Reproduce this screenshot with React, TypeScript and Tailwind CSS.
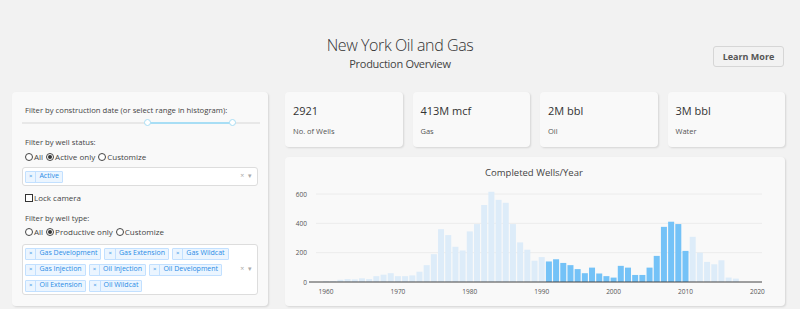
import React from "react";

const wells: number[] = [
  5, 6, 15, 20, 18, 25, 20, 40, 50, 60, 40, 40, 45, 70, 115, 190, 360, 320, 240, 215,
  345, 395, 525, 615, 560, 540, 395, 270, 220, 145, 170, 140, 155, 130, 115, 88, 60, 98, 58, 40,
  30, 110, 98, 48, 48, 98, 178, 376, 411, 395, 212, 308, 200, 137, 121, 148, 30, 23,
];

const Radio = ({ label, checked }: { label: string; checked?: boolean }) => (
  <label className="flex items-center gap-[1px] mr-[3px]">
    <span className="w-[8px] h-[8px] rounded-full border border-[#444] flex items-center justify-center bg-white">
      {checked && <span className="w-[4px] h-[4px] rounded-full bg-[#333]" />}
    </span>
    <span>{label}</span>
  </label>
);

const Tag = ({ label }: { label: string }) => (
  <span className="flex items-center h-[12px] border border-[#c2e0ff] bg-[#ebf5ff] text-[#2a8ce6] text-[7px] rounded-[1px]">
    <span className="px-[3px] border-r border-[#c2e0ff] h-full flex items-center text-[6px]">×</span>
    <span className="px-[3px]">{label}</span>
  </span>
);

const Stat = ({ value, label }: { value: string; label: string }) => (
  <div className="w-[118px] h-[55px] bg-[#f9f9f9] rounded-[4px] shadow-[1px_1px_2px_rgba(0,0,0,0.12)] pl-[8px] pt-[11px]">
    <div className="text-[11px] text-[#333] leading-[16px]">{value}</div>
    <div className="text-[7.5px] text-[#555] mt-[7px]">{label}</div>
  </div>
);

const Chart = () => {
  const base = 125;
  const k = 88 / 600;
  const x0 = 41;
  const step = 7.19;
  return (
    <svg width="500" height="149" className="block">
      <text x="249" y="19" textAnchor="middle" fontSize="9.5" fill="#444" fontFamily="Open Sans">
        Completed Wells/Year
      </text>
      {[200, 400, 600].map((v) => (
        <line key={v} x1="31" x2="477" y1={base - v * k} y2={base - v * k} stroke="#ececec" strokeWidth="1" />
      ))}
      {[0, 200, 400, 600].map((v) => (
        <text key={v} x="22" y={base - v * k + 2.5} textAnchor="end" fontSize="6.5" fill="#555" fontFamily="Open Sans">
          {v}
        </text>
      ))}
      {wells.map((w, i) => {
        const year = 1960 + i;
        const blue = year >= 1991 && year <= 2010;
        const h = w * k;
        return (
          <rect
            key={year}
            x={x0 + i * step - 3}
            y={base - h}
            width="6"
            height={h}
            fill={blue ? "#74c2f7" : "#ddecf9"}
          />
        );
      })}
      <line x1="24" x2="477" y1={base} y2={base} stroke="#444" strokeWidth="1" />
      {[1960, 1970, 1980, 1990, 2000, 2010, 2020].map((y) => (
        <text key={y} x={x0 + (y - 1960) * step} y="137" textAnchor="middle" fontSize="6.5" fill="#555" fontFamily="Open Sans">
          {y}
        </text>
      ))}
    </svg>
  );
};

export default function App() {
  return (
    <div className="w-[800px] h-[309px] overflow-hidden bg-[#f2f2f2] font-['Open_Sans',sans-serif] text-[#444]">
      {/* Header */}
      <div className="grid grid-cols-[1fr_auto_1fr] h-[92px] items-start pt-[34px]">
        <div />
        <div className="flex flex-col items-center">
          <h1 className="text-[16px] leading-[22px] text-[#333] font-light tracking-[-0.4px]">New York Oil and Gas</h1>
          <h2 className="text-[11px] leading-[16px] text-[#444] tracking-[-0.3px]">Production Overview</h2>
        </div>
        <div className="flex justify-end pr-[16px] pt-[12px]">
          <button className="w-[71px] h-[21px] border border-[#d6d6d6] rounded-[3px] text-[9px] font-bold text-[#555]">
            Learn More
          </button>
        </div>
      </div>

      {/* Body */}
      <div className="flex pl-[12px] gap-[17px]">
        <div className="w-[256px] h-[214px] bg-[#f9f9f9] rounded-[4px] shadow-[1px_1px_2px_rgba(0,0,0,0.12)] px-[10px] pt-[12px] text-[7.7px] text-[#444]">
          <div className="pl-[3px] leading-[12px]">Filter by construction date (or select range in histogram):</div>
          <div className="relative h-[10px] mt-[2px]">
            <div className="absolute left-0 right-[-2px] top-[4px] h-[2px] bg-[#e8e8e8]" />
            <div className="absolute left-[125px] w-[85px] top-[4px] h-[2px] bg-[#a8def5]" />
            <div className="absolute left-[122px] top-[1px] w-[7px] h-[7px] rounded-full border border-[#a8def5] bg-white" />
            <div className="absolute left-[207px] top-[1px] w-[7px] h-[7px] rounded-full border border-[#a8def5] bg-white" />
          </div>
          <div className="pl-[3px] mt-[8px] leading-[12px]">Filter by well status:</div>
          <div className="flex pl-[3px] mt-[3px] leading-[12px] text-[8px]">
            <Radio label="All" />
            <Radio label="Active only" checked />
            <Radio label="Customize" />
          </div>
          <div className="flex items-center justify-between mt-[4px] h-[19px] bg-white border border-[#ddd] rounded-[3px] px-[2px]">
            <Tag label="Active" />
            <span className="text-[#aaa] text-[7px] pr-[3px]">× <span className="ml-[2px]">▾</span></span>
          </div>
          <label className="flex items-center gap-[1px] pl-[3px] mt-[6px] leading-[12px] text-[8px]">
            <span className="w-[8px] h-[8px] border border-[#333] bg-white" />
            Lock camera
          </label>
          <div className="pl-[3px] mt-[8px] leading-[12px]">Filter by well type:</div>
          <div className="flex pl-[3px] mt-[2px] leading-[12px] text-[8px]">
            <Radio label="All" />
            <Radio label="Productive only" checked />
            <Radio label="Customize" />
          </div>
          <div className="flex items-center mt-[6px] h-[51px] bg-white border border-[#ddd] rounded-[3px] pl-[2px] pr-[5px]">
            <div className="flex-1 flex flex-wrap gap-x-[3px] gap-y-[4px]">
              <Tag label="Gas Development" />
              <Tag label="Gas Extension" />
              <Tag label="Gas Wildcat" />
              <Tag label="Gas Injection" />
              <Tag label="Oil Injection" />
              <Tag label="Oil Development" />
              <Tag label="Oil Extension" />
              <Tag label="Oil Wildcat" />
            </div>
            <span className="text-[#aaa] text-[7px]">× <span className="ml-[2px]">▾</span></span>
          </div>
        </div>

        <div className="w-[500px] flex flex-col gap-[10px]">
          <div className="flex gap-[10px]">
            <Stat value="2921" label="No. of Wells" />
            <Stat value="413M mcf" label="Gas" />
            <Stat value="2M bbl" label="Oil" />
            <Stat value="3M bbl" label="Water" />
          </div>
          <div className="h-[149px] bg-[#f9f9f9] rounded-[4px] shadow-[1px_1px_2px_rgba(0,0,0,0.12)]">
            <Chart />
          </div>
        </div>
      </div>
    </div>
  );
}
